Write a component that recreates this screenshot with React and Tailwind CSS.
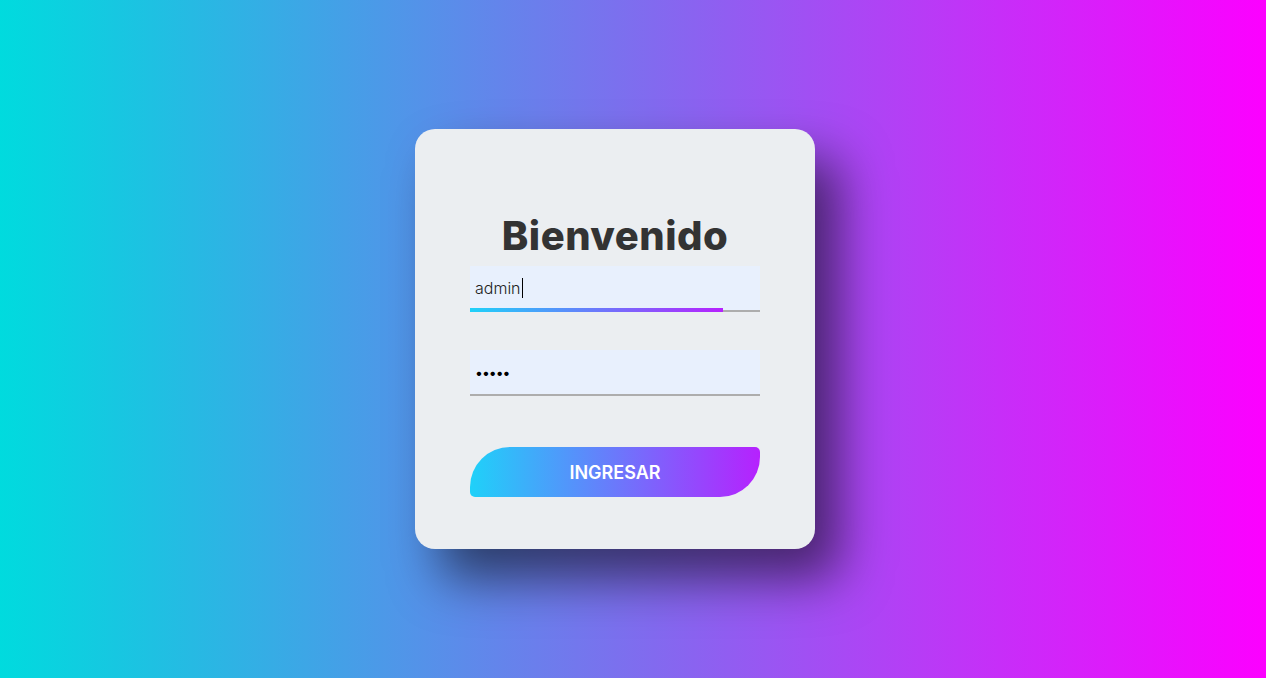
import React from 'react';

export default function App() {
    return (
        <div
            className="w-full h-[678px] flex items-center justify-center pr-[36px] bg-[linear-gradient(to_right,#00dbde,#fc00ff)]"
            style={{ fontFamily: 'Inter, "Open Sans", sans-serif' }}
        >
            <div className="w-[400px] h-[420px] rounded-[20px] bg-[#ebeef1] shadow-[25px_30px_50px_rgba(0,0,0,0.55)] flex flex-col items-center pt-[83px]">
                <h1 className="text-[40px] leading-[48px] font-extrabold text-[#333] tracking-[0.5px]">Bienvenido</h1>
                <div className="mt-[6px] w-[290px] relative">
                    <div className="h-[46px] bg-[#e8f0fd] border-b-2 border-[#adadad] flex items-center px-[5px] text-[16px] font-light text-[#222]">
                        <span>admin</span>
                        <span className="w-px h-[20px] bg-black ml-[1px]" />
                    </div>
                    <div className="absolute left-0 bottom-0 w-[253px] h-[4px] bg-[linear-gradient(to_right,#1fd1f9,#b621fe)]" />
                </div>
                <div className="mt-[38px] w-[290px] h-[46px] bg-[#e8f0fd] border-b-2 border-[#adadad] flex items-center px-[5px] text-[14px] tracking-[-1px] text-black">
                    •••••
                </div>
                <button className="mt-[51px] w-[290px] h-[50px] rounded-tl-[40px] rounded-br-[40px] rounded-tr-[5px] rounded-bl-[5px] bg-[linear-gradient(to_right,#1fd1f9,#b621fe)] text-white text-[18px] font-semibold">
                    INGRESAR
                </button>
            </div>
        </div>
    );
}
